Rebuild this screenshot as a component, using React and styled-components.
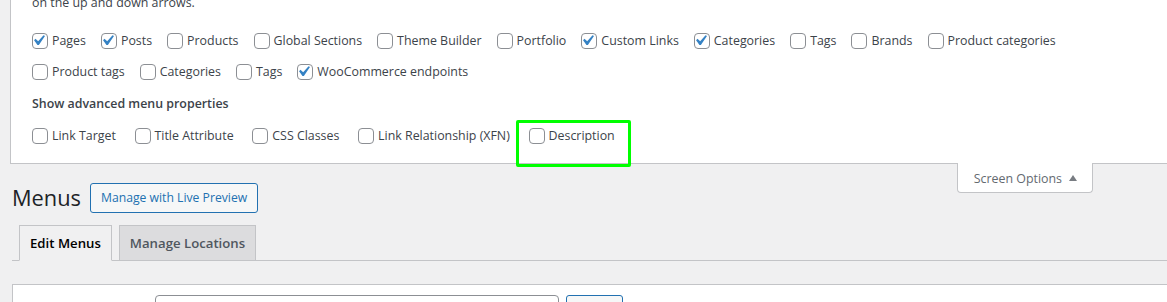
import React from "react";
import styled, { createGlobalStyle } from "styled-components";

const GlobalStyle = createGlobalStyle`
  html, body {
    margin: 0;
    padding: 0;
    background: #f0f0f1;
    overflow: hidden;
  }
  body {
    font-family: "Open Sans", "Noto Sans", sans-serif;
    font-size: 12.4px;
    color: #3c434a;
  }
  * { box-sizing: border-box; }
`;

const Page = styled.div`
  width: 1167px;
  height: 302px;
  overflow: hidden;
`;

const ScreenMeta = styled.div`
  margin: -7px 0 0 10px;
  background: #fff;
  border-left: 1px solid #c3c4c7;
  border-bottom: 1px solid #c3c4c7;
  padding: 0 0 12px 21px;
`;

const Intro = styled.p`
  margin: 0 0 12px;
  line-height: 20px;
`;

const PrefsRow = styled.div`
  display: flex;
  flex-wrap: wrap;
  max-width: 1090px;
  margin-top: ${(p) => p.$mt || 0}px;
`;

const Pref = styled.label`
  position: relative;
  display: inline-flex;
  align-items: center;
  height: 31px;
  line-height: 31px;
  margin-right: ${(p) => p.$gap}px;
  white-space: nowrap;
`;

const Box = styled.span`
  position: relative;
  display: inline-block;
  width: 16px;
  height: 16px;
  margin-right: 4px;
  border: 1px solid #8c8f94;
  border-radius: 4px;
  background: #fff;
  flex-shrink: 0;
`;

const Tick = styled.svg`
  position: absolute;
  top: -4px;
  left: -5px;
  width: 21px;
  height: 21px;
`;

const Legend = styled.div`
  margin-top: 7px;
  line-height: 20px;
  font-weight: 600;
  color: #3c434a;
`;

const Highlight = styled.span`
  position: absolute;
  left: -13px;
  top: 0;
  width: 115px;
  height: 47px;
  border: 3px solid #00ff00;
  border-radius: 2px;
  pointer-events: none;
`;

const MetaLinks = styled.div`
  float: right;
  margin: -1px 74px 0 0;
`;

const ScreenOptionsTab = styled.button`
  display: flex;
  align-items: center;
  gap: 7px;
  height: 30px;
  padding: 2px 15px 0 16px;
  background: #fff;
  border: 1px solid #c3c4c7;
  border-top: none;
  border-radius: 0 0 4px 4px;
  font: inherit;
  color: #646970;
  line-height: 19px;
`;

const Arrow = styled.span`
  width: 0;
  height: 0;
  border-left: 4px solid transparent;
  border-right: 4px solid transparent;
  border-bottom: 6px solid #787c82;
  margin-top: -1px;
`;

const Wrap = styled.div`
  margin-left: 12px;
`;

const TitleRow = styled.div`
  display: flex;
  align-items: center;
  gap: 9px;
  padding-top: 19px;
  height: 49px;
`;

const Title = styled.h1`
  margin: 0;
  font-size: 21.8px;
  font-weight: 400;
  line-height: 30px;
  color: #1d2327;
`;

const OutlineButton = styled.button`
  height: 30px;
  padding: 0 10px;
  border: 1px solid #2271b1;
  border-radius: 3px;
  background: #f6f7f7;
  color: #2271b1;
  font: inherit;
  font-size: 12.2px;
  line-height: 28px;
`;

const TabBar = styled.nav`
  display: flex;
  margin-top: 12px;
  border-bottom: 1px solid #c3c4c7;
  height: 36px;
`;

const Tab = styled.a`
  display: block;
  margin-left: 7px;
  padding: 5px 10px;
  border: 1px solid #c3c4c7;
  border-bottom: ${(p) => (p.$active ? "1px solid #f0f0f1" : "none")};
  background: ${(p) => (p.$active ? "#f0f0f1" : "#dcdcde")};
  color: ${(p) => (p.$active ? "#000" : "#50575e")};
  font-size: 13.2px;
  font-weight: 600;
  line-height: 24px;
  height: ${(p) => (p.$active ? 36 : 35)}px;
  text-decoration: none;
`;

const ManageBox = styled.div`
  display: flex;
  align-items: center;
  margin-top: 23px;
  padding: 10px 10px;
  background: #fff;
  border: 1px solid #c3c4c7;
  border-right: none;
`;

const SelectLabel = styled.span`
  width: 132px;
  color: #3c434a;
`;

const FakeSelect = styled.span`
  display: block;
  width: 404px;
  height: 30px;
  border: 1px solid #8c8f94;
  border-radius: 4px;
  background: #fff;
`;

const SmallButton = styled.span`
  display: block;
  margin-left: 7px;
  width: 57px;
  height: 30px;
  border: 1px solid #2271b1;
  border-radius: 3px;
  background: #f6f7f7;
  color: #2271b1;
  text-align: center;
  line-height: 28px;
`;

function Check({ checked, label, highlight, gap }) {
  return (
    <Pref $gap={gap}>
      {highlight && <Highlight />}
      <Box>
        {checked && (
          <Tick viewBox="0 0 20 20">
            <path
              d="M14.83 4.89l1.34.94-5.81 8.38H9.02L5.78 9.67l1.34-1.25 2.57 2.4z"
              fill="#3582c4"
            />
          </Tick>
        )}
      </Box>
      {label}
    </Pref>
  );
}

const boxes = [
  ["Pages", true],
  ["Posts", true],
  ["Products", false],
  ["Global Sections", false],
  ["Theme Builder", false],
  ["Portfolio", false],
  ["Custom Links", true],
  ["Categories", true],
  ["Tags", false],
  ["Brands", false],
  ["Product categories", false],
  ["Product tags", false],
  ["Categories", false],
  ["Tags", false],
  ["WooCommerce endpoints", true],
];

const advanced = ["Link Target", "Title Attribute", "CSS Classes", "Link Relationship (XFN)", "Description"];

export default function App() {
  return (
    <>
      <GlobalStyle />
      <Page>
        <ScreenMeta>
          <Intro>on the up and down arrows.</Intro>
          <PrefsRow>
            {boxes.map(([l, c], i) => (
              <Check key={i} label={l} checked={c} gap={15} />
            ))}
          </PrefsRow>
          <Legend>Show advanced menu properties</Legend>
          <PrefsRow $mt={6}>
            {advanced.map((l) => (
              <Check key={l} label={l} gap={18.7} highlight={l === "Description"} />
            ))}
          </PrefsRow>
        </ScreenMeta>
        <MetaLinks>
          <ScreenOptionsTab>
            Screen Options <Arrow />
          </ScreenOptionsTab>
        </MetaLinks>
        <Wrap>
          <TitleRow>
            <Title>Menus</Title>
            <OutlineButton>Manage with Live Preview</OutlineButton>
          </TitleRow>
          <TabBar>
            <Tab $active>Edit Menus</Tab>
            <Tab>Manage Locations</Tab>
          </TabBar>
          <ManageBox>
            <SelectLabel>Select a menu to edit:</SelectLabel>
            <FakeSelect />
            <SmallButton>Select</SmallButton>
          </ManageBox>
        </Wrap>
      </Page>
    </>
  );
}
